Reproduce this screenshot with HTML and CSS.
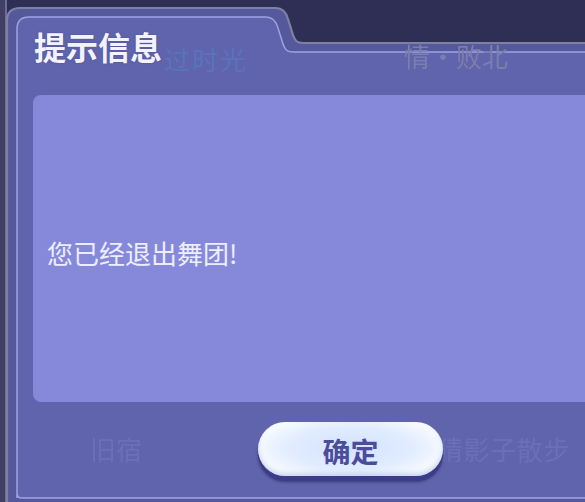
FILE: index.html
```html
<!DOCTYPE html>
<html lang="zh-CN">
<head>
<meta charset="utf-8">
<title>提示信息</title>
<link rel="stylesheet" href="styles.css">
</head>
<body>
<div class="screen">
  <svg class="frame" viewBox="0 0 585 502" width="585" height="502" aria-hidden="true">
    <rect x="0" y="0" width="585" height="502" fill="#2f2e54"/>
    <rect x="0" y="0" width="6" height="502" fill="#423f66"/>
    <rect x="5" y="0" width="2" height="502" fill="#6f6d96"/>
    <path d="M7 504 L7 21 Q7 8 20 8 L276 8 C283 8 286 12 288 19 L293 35 C295 41 297 43 303 43 L590 43 L590 504 Z" fill="#55589a" stroke="#7f81a4" stroke-width="2.2"/>
    <path d="M17 498 L17 29 Q17 17 29 17 L266 17 C273 17 276 21 278 28 L283 44 C285 50 287 52 294 52 L590 52 L590 498 L22 498 Q17 498 17 493 Z" fill="#6064ac" stroke="#9ca2e4" stroke-width="1.5"/>
  </svg>
  <div class="dialog">
    <div class="header">
      <span class="ghost ghost-a">过时光</span>
      <span class="ghost ghost-b">情·败北</span>
      <h1 class="title">提示信息</h1>
    </div>
    <div class="content">
      <p class="message">您已经退出舞团!</p>
    </div>
    <div class="footer">
      <span class="ghost ghost-c">旧宿</span>
      <span class="ghost ghost-d">猜影子散步</span>
      <button class="btn" type="button">确定</button>
    </div>
  </div>
</div>
</body>
</html>
```

FILE: styles.css
```css
html, body {
  margin: 0;
  padding: 0;
}
body {
  width: 585px;
  height: 502px;
  overflow: hidden;
  background: #2f2e54;
  font-family: "Noto Sans CJK SC", "Noto Sans", sans-serif;
}
.screen {
  position: relative;
  width: 585px;
  height: 502px;
  overflow: hidden;
}
.frame {
  position: absolute;
  left: 0;
  top: 0;
  z-index: 0;
}
.dialog {
  position: relative;
  z-index: 1;
  display: flex;
  flex-direction: column;
  padding-left: 33px;
}
.header {
  height: 95px;
  display: grid;
}
.header > * {
  grid-area: 1 / 1;
  justify-self: start;
  align-self: start;
}
.ghost {
  font-size: 26px;
  line-height: 26px;
  white-space: nowrap;
  filter: blur(0.6px);
}
.ghost-a {
  margin: 46px 0 0 131px;
  color: #5874bb;
  letter-spacing: 2px;
}
.ghost-b {
  margin: 43px 0 0 371px;
  color: #7c7eab;
}
.title {
  margin: 30px 0 0 1px;
  font-size: 32px;
  line-height: 32px;
  font-weight: 700;
  color: #f2f3ff;
  text-shadow: 0 0 2px rgba(60, 60, 120, 0.5);
}
.content {
  width: 570px;
  height: 307px;
  box-sizing: border-box;
  background: #8689da;
  border-radius: 8px;
  display: flex;
  align-items: center;
  padding: 8px 0 0 14px;
}
.message {
  margin: 0;
  font-size: 26px;
  line-height: 30px;
  color: #eceeff;
}
.footer {
  height: 100px;
  display: grid;
}
.footer > * {
  grid-area: 1 / 1;
  justify-self: start;
  align-self: start;
}
.ghost-c {
  margin: 34px 0 0 57px;
  color: #6b70b6;
}
.ghost-d {
  margin: 34px 0 0 404px;
  color: #6b70b6;
  letter-spacing: 0.6px;
}
.btn {
  position: relative;
  z-index: 1;
  margin: 20px 0 0 225px;
  width: 185px;
  height: 54px;
  border: none;
  border-radius: 27px;
  padding: 3px 0 0 0;
  font-family: "Noto Sans CJK SC", sans-serif;
  font-size: 28px;
  font-weight: 700;
  line-height: 30px;
  color: #4b4c9c;
  background: radial-gradient(ellipse 60% 70% at 50% 48%, #d3e2ff 0%, #e1ecff 55%, #f6f9ff 85%, #ffffff 100%);
  box-shadow: 0 5px 0 #3b3d88, 0 6px 3px rgba(25, 25, 70, 0.55), inset 0 -3px 4px rgba(160, 180, 230, 0.5);
}
```
